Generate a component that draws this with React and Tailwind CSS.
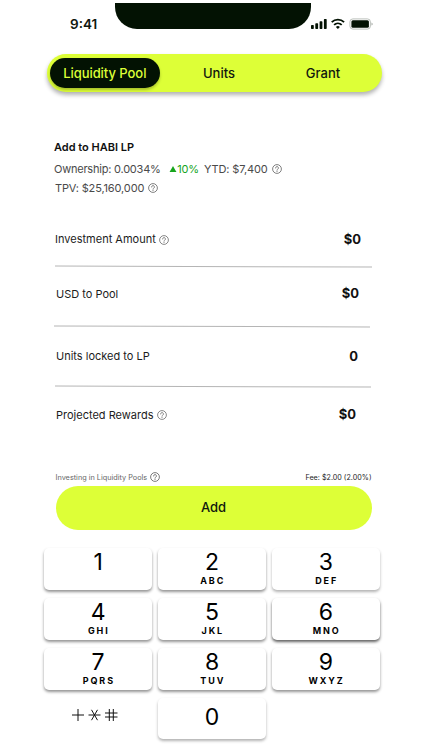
const rows = [
  { label: 'Investment Amount', value: '$0', help: true,  row: 'h-[54px] pt-[1px] pl-[1px] pr-[11px]', line: 'ml-[1px] w-[317px] rotate-[0.2deg]' },
  { label: 'USD to Pool',       value: '$0', help: false, row: 'h-[59px] pb-[5px] pl-[2px] pr-[13px]', line: 'w-[316px] rotate-[0.15deg]' },
  { label: 'Units locked to LP', value: '0', help: false, row: 'h-[59px] pl-[2px] pr-[14px]', line: 'ml-[1px] w-[316px] rotate-[0.2deg]' },
  { label: 'Projected Rewards', value: '$0', help: true,  row: 'h-[56px] pl-[2px] pr-[16px]', line: null },
]

const keys = [
  { digit: '1', letters: '',     shadow: 'shadow-[0_2px_3px_rgba(0,0,0,0.42)]' },
  { digit: '2', letters: 'ABC',  shadow: 'shadow-[0_2px_3px_rgba(0,0,0,0.42)]' },
  { digit: '3', letters: 'DEF',  shadow: 'shadow-[0_2px_3px_rgba(0,0,0,0.3)]' },
  { digit: '4', letters: 'GHI',  shadow: 'shadow-[0_2px_3px_rgba(0,0,0,0.42)]' },
  { digit: '5', letters: 'JKL',  shadow: 'shadow-[0_2px_3px_rgba(0,0,0,0.42)]' },
  { digit: '6', letters: 'MNO',  shadow: 'shadow-[0_2px_3px_rgba(0,0,0,0.62)]' },
  { digit: '7', letters: 'PQRS', shadow: 'shadow-[0_2px_3px_rgba(0,0,0,0.42)]' },
  { digit: '8', letters: 'TUV',  shadow: 'shadow-[0_2px_3px_rgba(0,0,0,0.42)]' },
  { digit: '9', letters: 'WXYZ', shadow: 'shadow-[0_2px_3px_rgba(0,0,0,0.42)]' },
]

function HelpIcon({ className }) {
  return (
    <svg viewBox="0 0 10 10" fill="none" stroke="currentColor" className={className}>
      <circle cx="5" cy="5" r="4.4" strokeWidth="0.7" />
      <path d="M3.6 4a1.4 1.4 0 1 1 2.1 1.2C5.2 5.5 5 5.7 5 6.2" strokeWidth="0.7" strokeLinecap="round" />
      <circle cx="5" cy="7.4" r="0.25" strokeWidth="0.4" fill="currentColor" />
    </svg>
  )
}

function StatusBar() {
  return (
    <div className="flex h-[54px] items-start">
      <span className="ml-[70px] mt-[14px] w-[45px] text-[13.5px] font-semibold leading-[20px] text-[#10180f]">9:41</span>
      <div className="mt-[3px] h-[25.5px] w-[196px] rounded-b-[22px] bg-[#031203]" />
      {/* Signal, wifi, battery */}
      <svg viewBox="0 0 62 12" className="mt-[18px] h-[12px] w-[62px] text-[#031203]" fill="currentColor">
        <rect x="0" y="7" width="2.8" height="4" rx="0.7" />
        <rect x="4.3" y="5.3" width="2.8" height="5.7" rx="0.7" />
        <rect x="8.6" y="3.2" width="2.8" height="7.8" rx="0.7" />
        <rect x="12.9" y="1" width="2.8" height="10" rx="0.7" />
        <g fill="none" stroke="currentColor" strokeWidth="1.8">
          <path d="M20.7 4.2a9 9 0 0 1 12.4 0" />
          <path d="M23.1 6.8a5.5 5.5 0 0 1 7.6 0" />
        </g>
        <path d="M24.9 8.9a3.1 3.1 0 0 1 4 0L26.9 11Z" />
        <rect x="38.9" y="0.9" width="20.5" height="10.2" rx="3" fill="none" stroke="#b3b9b3" strokeWidth="0.9" />
        <rect x="40.4" y="2.3" width="17.5" height="7.4" rx="1.5" />
        <path d="M60.5 4.5v3q1.2-.5 1.2-1.5t-1.2-1.5Z" fill="#a0a6a0" />
      </svg>
    </div>
  )
}

function Key({ digit, letters, shadow }) {
  return (
    <button className={`flex h-[42px] w-full flex-col items-center rounded-[5px] bg-white text-black ${shadow}`}>
      <span className="text-[23px] leading-[28px]">{digit}</span>
      <span className="mt-[-1px] pl-[1.5px] text-[9px] font-bold leading-[11px] tracking-[1.9px]">{letters}</span>
    </button>
  )
}

export default function App() {
  return (
    <div className="h-[750px] w-[422px] overflow-hidden bg-white font-['Inter',sans-serif] text-[#1c1c1c]">
      <StatusBar />

      {/* Tabs */}
      <div className="ml-[46.5px] flex h-[37.5px] w-[335.5px] items-center rounded-full bg-[#ddff37] text-[13px] font-medium text-[#10180f] shadow-[0_3px_4px_rgba(0,0,0,0.3)]">
        <button className="ml-[3px] h-[30.5px] w-[110.5px] rounded-full bg-[#031203] pt-[2px] tracking-[-0.05px] text-[#ddff37] shadow-[0_2px_3px_rgba(0,0,0,0.25)]">Liquidity Pool</button>
        <button className="w-[118px] pt-[1px]">Units</button>
        <button className="w-[90px] pt-[2px]">Grant</button>
      </div>

      {/* Pool summary */}
      <div className="ml-[54px] mt-[45.5px] text-[11px] text-[#4a4a4a]">
        <h1 className="h-[22px] font-semibold leading-[20px] text-[#111]">Add to HABI LP</h1>
        <div className="flex h-[20px] items-center">
          <span className="tracking-[-0.22px]">Ownership: 0.0034%</span>
          <svg viewBox="0 0 8 7" className="ml-[8.5px] h-[6.5px] w-[8px]" fill="#17a51d"><path d="M4 0 8 7H0Z" /></svg>
          <span className="tracking-[-0.15px] text-[#17a51d]">10%</span>
          <span className="ml-[5px] tracking-[-0.12px]">YTD: $7,400</span>
          <HelpIcon className="ml-[4px] size-[10px]" />
        </div>
        <div className="flex h-[19px] items-center pl-[1px]">
          <span className="tracking-[-0.13px]">TPV: $25,160,000</span>
          <HelpIcon className="mb-[1px] ml-[4px] size-[10px]" />
        </div>
      </div>

      {/* Amounts */}
      <div className="ml-[54px] mt-[14px] w-[318px]">
        {rows.map((r) => (
          <div key={r.label}>
            <div className={`flex items-center ${r.row}`}>
              <span className="text-[11px]">{r.label}</span>
              {r.help && <HelpIcon className="ml-[3px] size-[10px] text-[#555]" />}
              <span className="ml-auto text-[13px] font-bold text-[#111]">{r.value}</span>
            </div>
            {r.line && <div className={`h-px bg-[#b5b5b5] ${r.line}`} />}
          </div>
        ))}
      </div>

      {/* Submit */}
      <div className="ml-[55.5px] mt-[27px] w-[316px]">
        <div className="flex h-[15.5px] items-center text-[7.2px]">
          <span className="pt-px text-[7.3px] text-[#666]">Investing in Liquidity Pools</span>
          <HelpIcon className="mb-[2px] ml-[2.5px] size-[10px] text-[#444]" />
          <span className="ml-auto pt-px">Fee: $2.00 (2.00%)</span>
        </div>
        <button className="h-[44px] w-full rounded-full bg-[#ddff37] text-[13px] font-medium text-[#10180f]">Add</button>
      </div>

      {/* Keypad */}
      <div className="ml-[44px] mt-[18.5px] grid w-[336px] grid-cols-3 gap-x-[5.75px] gap-y-[8px]">
        {keys.map((k) => <Key key={k.digit} {...k} />)}
        <div className="flex justify-center pr-[7px]">
          <svg viewBox="0 0 48 14" className="mt-[9.5px] h-[14px] w-[48px]" fill="none" stroke="#111" strokeWidth="1">
            <path d="M1 7h12M7 1v12" />
            <path d="M17.5 7h12M20.5 1.8l6 10.4M26.5 1.8l-6 10.4" />
            <path d="M34 5h12.5M34 9h12.5M38.3 1v12M42.3 1v12" />
          </svg>
        </div>
        <button className="flex h-[41px] items-center justify-center rounded-[5px] bg-white pb-[2px] text-[23px] text-black shadow-[0_2px_3px_rgba(0,0,0,0.3)]">0</button>
      </div>
    </div>
  )
}
